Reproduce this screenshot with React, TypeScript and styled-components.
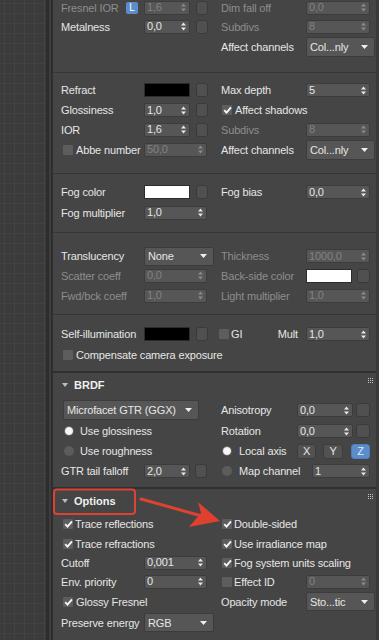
import React from "react";
import styled, { createGlobalStyle } from "styled-components";

const C = {
  panel: "#454545",
  field: "#565656",
  fieldBorder: "#3c3c3c",
  text: "#e6e6e6",
  dim: "#8d8d8d",
  dimVal: "#828282",
  blue: "#5b8dcb",
};

const Global = createGlobalStyle`
  html, body { margin: 0; padding: 0; background: #393939; }
  body {
    font-family: "Liberation Sans", Arial, sans-serif;
    font-size: 11px;
    letter-spacing: -0.15px;
    color: ${C.text};
  }
  * { box-sizing: border-box; }
`;

const Screen = styled.div`
  position: relative;
  display: flex;
  width: 379px;
  height: 640px;
  overflow: hidden;
`;

const Viewport = styled.div`
  flex: none;
  width: 46px;
  background-color: #3b3b3b;
  background-image:
    linear-gradient(to right, #424242 1px, transparent 1px),
    linear-gradient(to bottom, #424242 1px, transparent 1px);
  background-size: 10px 10px;
  background-position: 4px 3px;
`;

const Gutter = styled.div`
  flex: none;
  width: 7px;
  background: linear-gradient(
    to right,
    #2d2d2d 0 3px,
    #3d3d3d 3px 5px,
    #2e2e2e 5px 7px
  );
`;

const Panel = styled.div`
  flex: 1;
  min-width: 0;
  background: ${C.panel};
  border-right: 3px solid #3a3a3a;
  display: flex;
  flex-direction: column;
`;

const Rollout = styled.section`
  border-bottom: 2px solid #303030;
`;

const Header = styled.div`
  display: flex;
  align-items: center;
  height: 23px;
  padding: 0 3px 0 9px;
  font-weight: bold;
  letter-spacing: 0;
  color: #f0f0f0;
`;

const Title = styled.span`
  margin-left: 6px;
`;

const Dots = styled.svg`
  margin-left: auto;
  margin-bottom: 9px;
`;

const Group = styled.div<{ $pt: number; $pb: number; $sep?: boolean; $mt?: number }>`
  padding: ${(p) => p.$pt}px 0 ${(p) => p.$pb}px;
  margin-top: ${(p) => p.$mt ?? 0}px;
  border-top: ${(p) => (p.$sep ? "1px solid #363636" : "none")};
`;

const Row = styled.div<{ $h?: number }>`
  display: grid;
  grid-template-columns: 160px 1fr;
  align-items: center;
  height: ${(p) => p.$h ?? 20}px;
  padding-left: 8px;
`;

const Cell = styled.div<{ $span?: boolean }>`
  display: flex;
  align-items: center;
  min-width: 0;
  grid-column: ${(p) => (p.$span ? "1 / -1" : "auto")};
`;

const Label = styled.span<{ $w?: number; $off?: boolean; $ml?: number; $push?: boolean }>`
  flex: none;
  width: ${(p) => (p.$w ? `${p.$w}px` : "auto")};
  margin-left: ${(p) => (p.$push ? "auto" : `${p.$ml ?? 0}px`)};
  color: ${(p) => (p.$off ? C.dim : C.text)};
  white-space: nowrap;
`;

const LabelArea = styled.div<{ $w: number; $pr?: number; $ml?: number }>`
  flex: none;
  display: flex;
  align-items: center;
  width: ${(p) => p.$w}px;
  padding-right: ${(p) => p.$pr ?? 0}px;
  margin-left: ${(p) => p.$ml ?? 0}px;
`;

const LockBtn = styled.span`
  margin-left: auto;
  width: 12px;
  height: 12px;
  border-radius: 2px;
  background: ${C.blue};
  color: #fff;
  font-size: 10px;
  display: flex;
  align-items: center;
  justify-content: center;
`;

const SpinBox = styled.div<{ $w: number; $off?: boolean }>`
  flex: none;
  width: ${(p) => p.$w}px;
  height: 14px;
  background: ${C.field};
  border: 1px solid ${C.fieldBorder};
  border-radius: 2px;
  display: flex;
  align-items: center;
  justify-content: space-between;
  padding: 0 3px 0 2px;
  color: ${(p) => (p.$off ? C.dimVal : C.text)};
  line-height: 1;
`;

const DropBox = styled.div<{ $w: number; $h: number; $ml?: number }>`
  flex: none;
  width: ${(p) => p.$w}px;
  height: ${(p) => p.$h}px;
  margin-left: ${(p) => p.$ml ?? 0}px;
  background: ${C.field};
  border: 1px solid ${C.fieldBorder};
  border-radius: 2px;
  display: flex;
  align-items: center;
  justify-content: space-between;
  padding: 0 6px 0 3px;
  color: ${C.text};
`;

const MapBtn = styled.div<{ $w?: number; $ml?: number }>`
  flex: none;
  width: ${(p) => p.$w ?? 12}px;
  height: 14px;
  margin-left: ${(p) => p.$ml ?? 6}px;
  background: #505050;
  border: 1px solid #3a3a3a;
  border-radius: 3px;
`;

const Swatch = styled.div<{ $c: string; $w?: number }>`
  flex: none;
  width: ${(p) => p.$w ?? 46}px;
  height: 14px;
  background: ${(p) => p.$c};
  border: 1px solid #2c2c2c;
`;

const Box = styled.span<{ $ml?: number }>`
  flex: none;
  width: 10px;
  height: 10px;
  margin-left: ${(p) => p.$ml ?? 0}px;
  background: #5d5d5d;
  border-radius: 1px;
  display: inline-flex;
  align-items: center;
  justify-content: center;
`;

const RadioDot = styled.span<{ $on?: boolean; $ml?: number }>`
  flex: none;
  width: 10px;
  height: 10px;
  margin-left: ${(p) => p.$ml ?? 0}px;
  border-radius: 50%;
  background: ${(p) =>
    p.$on
      ? "radial-gradient(circle, #f6f6f6 0 3.4px, #b8b8b8 3.9px, #5c5c5c 4.6px)"
      : "#5c5c5c"};
`;

const AxisBtn = styled.div<{ $on?: boolean; $w: number; $ml?: number }>`
  flex: none;
  width: ${(p) => p.$w}px;
  height: 15px;
  margin-left: ${(p) => p.$ml ?? 0}px;
  border-radius: 3px;
  background: ${(p) => (p.$on ? C.blue : "#525252")};
  border: 1px solid ${(p) => (p.$on ? "#4f7fb8" : "#3c3c3c")};
  color: #e8e8e8;
  display: flex;
  align-items: center;
  justify-content: center;
`;

const Overlay = styled.svg`
  position: absolute;
  left: 0;
  top: 0;
  pointer-events: none;
`;

const Arrows = ({ off }: { off?: boolean }) => (
  <svg width="5" height="9" viewBox="0 0 5 9">
    <path d="M0 3.6 L2.5 0.6 L5 3.6Z M0 5.4 L2.5 8.4 L5 5.4Z" fill={off ? "#8a8a8a" : "#e8e8e8"} />
  </svg>
);

const Spinner = ({ v, w, off }: { v: string; w: number; off?: boolean }) => (
  <SpinBox $w={w} $off={off}>
    <span>{v}</span>
    <Arrows off={off} />
  </SpinBox>
);

const Drop = ({ v, w, h = 20, ml }: { v: string; w: number; h?: number; ml?: number }) => (
  <DropBox $w={w} $h={h} $ml={ml}>
    <span>{v}</span>
    <svg width="7" height="4" viewBox="0 0 7 4">
      <path d="M0 0H7L3.5 4Z" fill="#eeeeee" />
    </svg>
  </DropBox>
);

const Check = ({ on, ml }: { on?: boolean; ml?: number }) => (
  <Box $ml={ml}>
    {on && (
      <svg width="9" height="8" viewBox="0 0 9 8">
        <path d="M1.2 4.2 L3.5 6.6 L8 1.3" stroke="#f5f5f5" strokeWidth="1.9" fill="none" />
      </svg>
    )}
  </Box>
);

const GripDots = () => (
  <Dots width="5" height="5" viewBox="0 0 5 5">
    {[0, 2, 4].map((y) =>
      [0, 2, 4].map((x) => <rect key={`${x}-${y}`} x={x} y={y} width="1" height="1" fill="#c8c8c8" />)
    )}
  </Dots>
);

const Triangle = () => (
  <svg width="6" height="4" viewBox="0 0 6 4">
    <path d="M0 0H6L3 4Z" fill="#bdbdbd" />
  </svg>
);

export default function App() {
  return (
    <>
      <Global />
      <Screen>
        <Viewport />
        <Gutter />
        <Panel>
          <Rollout>
            <Group $pt={0} $pb={14} $mt={-2}>
              <Row $h={19}>
                <Cell>
                  <LabelArea $w={83} $pr={6}>
                    <Label $off>Fresnel IOR</Label>
                    <LockBtn>L</LockBtn>
                  </LabelArea>
                  <Spinner v="1,6" w={46} off />
                  <MapBtn />
                </Cell>
                <Cell>
                  <Label $w={85} $off>Dim fall off</Label>
                  <Spinner v="0,0" w={64} off />
                </Cell>
              </Row>
              <Row $h={19}>
                <Cell>
                  <Label $w={83}>Metalness</Label>
                  <Spinner v="0,0" w={46} />
                  <MapBtn />
                </Cell>
                <Cell>
                  <Label $w={85} $off>Subdivs</Label>
                  <Spinner v="8" w={64} off />
                </Cell>
              </Row>
              <Row $h={22}>
                <Cell />
                <Cell>
                  <Label $w={85}>Affect channels</Label>
                  <Drop v="Col...nly" w={69} />
                </Cell>
              </Row>
            </Group>

            <Group $sep $pt={7} $pb={13}>
              <Row>
                <Cell>
                  <Label $w={83}>Refract</Label>
                  <Swatch $c="#000000" />
                  <MapBtn />
                </Cell>
                <Cell>
                  <Label $w={85}>Max depth</Label>
                  <Spinner v="5" w={64} />
                </Cell>
              </Row>
              <Row>
                <Cell>
                  <Label $w={83}>Glossiness</Label>
                  <Spinner v="1,0" w={46} />
                  <MapBtn />
                </Cell>
                <Cell>
                  <Check on ml={1} />
                  <Label $ml={3}>Affect shadows</Label>
                </Cell>
              </Row>
              <Row $h={19}>
                <Cell>
                  <Label $w={83}>IOR</Label>
                  <Spinner v="1,6" w={46} />
                  <MapBtn />
                </Cell>
                <Cell>
                  <Label $w={85} $off>Subdivs</Label>
                  <Spinner v="8" w={64} off />
                </Cell>
              </Row>
              <Row $h={21}>
                <Cell>
                  <LabelArea $w={83}>
                    <Check ml={2} />
                    <Label $ml={3}>Abbe number</Label>
                  </LabelArea>
                  <Spinner v="50,0" w={63} off />
                </Cell>
                <Cell>
                  <Label $w={85}>Affect channels</Label>
                  <Drop v="Col...nly" w={69} />
                </Cell>
              </Row>
            </Group>

            <Group $sep $pt={8} $pb={9}>
              <Row>
                <Cell>
                  <Label $w={83}>Fog color</Label>
                  <Swatch $c="#ffffff" />
                  <MapBtn />
                </Cell>
                <Cell>
                  <Label $w={85}>Fog bias</Label>
                  <Spinner v="0,0" w={64} />
                </Cell>
              </Row>
              <Row $h={21}>
                <Cell>
                  <Label $w={83}>Fog multiplier</Label>
                  <Spinner v="1,0" w={63} />
                </Cell>
                <Cell />
              </Row>
            </Group>

            <Group $sep $pt={13} $pb={8}>
              <Row>
                <Cell>
                  <Label $w={83}>Translucency</Label>
                  <Drop v="None" w={70} h={19} />
                </Cell>
                <Cell>
                  <Label $w={85} $off>Thickness</Label>
                  <Spinner v="1000,0" w={64} off />
                </Cell>
              </Row>
              <Row $h={19}>
                <Cell>
                  <Label $w={83} $off>Scatter coeff</Label>
                  <Spinner v="0,0" w={63} off />
                </Cell>
                <Cell>
                  <Label $w={85} $off>Back-side color</Label>
                  <Swatch $c="#ffffff" $w={46} />
                  <MapBtn $w={13} $ml={5} />
                </Cell>
              </Row>
              <Row $h={21}>
                <Cell>
                  <Label $w={83} $off>Fwd/bck coeff</Label>
                  <Spinner v="1,0" w={63} off />
                </Cell>
                <Cell>
                  <Label $w={85} $off>Light multiplier</Label>
                  <Spinner v="1,0" w={64} off />
                </Cell>
              </Row>
            </Group>

            <Group $sep $pt={9} $pb={6}>
              <Row>
                <Cell>
                  <Label $w={83}>Self-illumination</Label>
                  <Swatch $c="#000000" />
                  <MapBtn />
                </Cell>
                <Cell>
                  <LabelArea $w={85} $pr={8}>
                    <Check ml={-2} />
                    <Label $ml={2}>GI</Label>
                    <Label $push>Mult</Label>
                  </LabelArea>
                  <Spinner v="1,0" w={64} />
                </Cell>
              </Row>
              <Row $h={21}>
                <Cell $span>
                  <Check ml={2} />
                  <Label $ml={3}>Compensate camera exposure</Label>
                </Cell>
              </Row>
            </Group>
          </Rollout>

          <Rollout>
            <Header>
              <Triangle />
              <Title>BRDF</Title>
              <GripDots />
            </Header>
            <Group $pt={3} $pb={6}>
              <Row $h={22}>
                <Cell>
                  <Drop v="Microfacet GTR (GGX)" w={136} ml={2} />
                </Cell>
                <Cell>
                  <Label $w={76}>Anisotropy</Label>
                  <Spinner v="0,0" w={56} />
                  <MapBtn $w={14} $ml={3} />
                </Cell>
              </Row>
              <Row>
                <Cell>
                  <RadioDot $on $ml={3} />
                  <Label $ml={6}>Use glossiness</Label>
                </Cell>
                <Cell>
                  <Label $w={76}>Rotation</Label>
                  <Spinner v="0,0" w={56} />
                  <MapBtn $w={14} $ml={3} />
                </Cell>
              </Row>
              <Row>
                <Cell>
                  <RadioDot $ml={3} />
                  <Label $ml={6}>Use roughness</Label>
                </Cell>
                <Cell>
                  <LabelArea $w={76}>
                    <RadioDot $on $ml={1} />
                    <Label $ml={7}>Local axis</Label>
                  </LabelArea>
                  <AxisBtn $w={19}>X</AxisBtn>
                  <AxisBtn $w={20} $ml={7}>Y</AxisBtn>
                  <AxisBtn $w={19} $ml={8} $on>Z</AxisBtn>
                </Cell>
              </Row>
              <Row>
                <Cell>
                  <Label $w={83}>GTR tail falloff</Label>
                  <Spinner v="2,0" w={46} />
                  <MapBtn $ml={5} />
                </Cell>
                <Cell>
                  <LabelArea $w={91}>
                    <RadioDot $ml={1} />
                    <Label $ml={7}>Map channel</Label>
                  </LabelArea>
                  <Spinner v="1" w={58} />
                </Cell>
              </Row>
            </Group>
          </Rollout>

          <section>
            <Header>
              <Triangle />
              <Title>Options</Title>
              <GripDots />
            </Header>
            <Group $pt={2} $pb={0}>
              <Row>
                <Cell>
                  <Check on ml={2} />
                  <Label $ml={2}>Trace reflections</Label>
                </Cell>
                <Cell>
                  <Check on ml={1} />
                  <Label $ml={2}>Double-sided</Label>
                </Cell>
              </Row>
              <Row $h={19}>
                <Cell>
                  <Check on ml={2} />
                  <Label $ml={2}>Trace refractions</Label>
                </Cell>
                <Cell>
                  <Check on ml={1} />
                  <Label $ml={2}>Use irradiance map</Label>
                </Cell>
              </Row>
              <Row $h={19}>
                <Cell>
                  <Label $w={83}>Cutoff</Label>
                  <Spinner v="0,001" w={63} />
                </Cell>
                <Cell>
                  <Check on ml={1} />
                  <Label $ml={2}>Fog system units scaling</Label>
                </Cell>
              </Row>
              <Row $h={19}>
                <Cell>
                  <Label $w={83}>Env. priority</Label>
                  <Spinner v="0" w={63} />
                </Cell>
                <Cell>
                  <LabelArea $w={85}>
                    <Check ml={1} />
                    <Label $ml={2}>Effect ID</Label>
                  </LabelArea>
                  <Spinner v="0" w={64} off />
                </Cell>
              </Row>
              <Row $h={21}>
                <Cell>
                  <Check on ml={2} />
                  <Label $ml={3}>Glossy Fresnel</Label>
                </Cell>
                <Cell>
                  <Label $w={85}>Opacity mode</Label>
                  <Drop v="Sto...tic" w={69} h={19} />
                </Cell>
              </Row>
              <Row $h={21}>
                <Cell>
                  <Label $w={83}>Preserve energy</Label>
                  <Drop v="RGB" w={70} h={19} />
                </Cell>
                <Cell />
              </Row>
            </Group>
          </section>
        </Panel>

        <Overlay width="379" height="640" viewBox="0 0 379 640">
          <rect x="54" y="489.5" width="81" height="24.5" rx="3" fill="none" stroke="#dc4332" strokeWidth="2" />
          <line x1="141" y1="499" x2="200" y2="515.5" stroke="#dc4332" strokeWidth="3" strokeLinecap="round" />
          <polygon points="220,521 198,502 201,513 189,527" fill="#e0402f" />
        </Overlay>
      </Screen>
    </>
  );
}
